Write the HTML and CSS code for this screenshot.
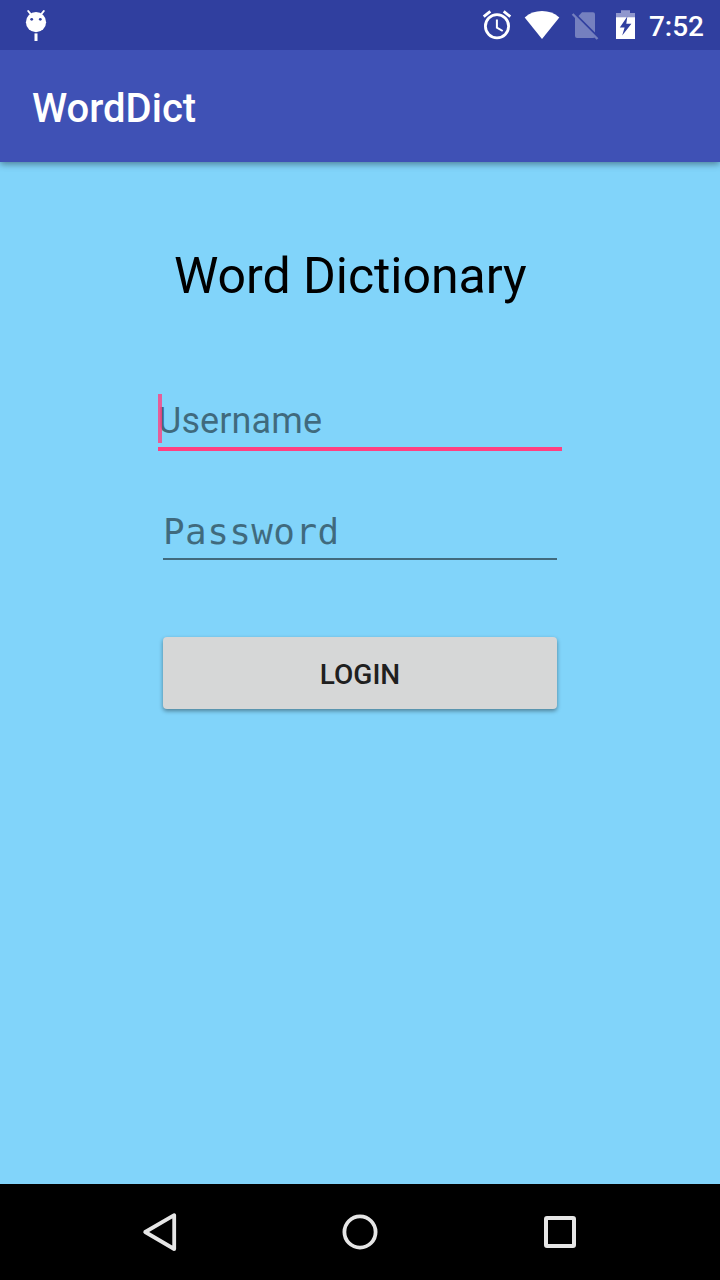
FILE: index.html
```html
<!DOCTYPE html>
<html lang="en">
<head>
<meta charset="utf-8">
<title>WordDict</title>
<link rel="stylesheet" href="styles.css">
</head>
<body>
<div class="screen">
  <header class="status-bar">
    <svg class="debug-icon" width="24" height="34" viewBox="0 0 24 34">
      <circle cx="12" cy="14.2" r="10.1" fill="#fff"/>
      <path d="M4.2 3 L7 6.5 M19.8 3 L17 6.5" stroke="#fff" stroke-width="2" stroke-linecap="round"/>
      <circle cx="7.7" cy="11.3" r="1.4" fill="#303f9f"/>
      <circle cx="16.3" cy="11.3" r="1.4" fill="#303f9f"/>
      <rect x="10.5" y="25.4" width="3" height="7.6" fill="#fff"/>
    </svg>
    <div class="status-icons">
      <svg width="30" height="32" viewBox="482 9 30 32" fill="none" stroke="#fff">
        <circle cx="497" cy="26.2" r="11.6" stroke-width="2.8"/>
        <path d="M496.9 19.5 V27.6 L502.7 31" stroke-width="2"/>
        <path d="M483.7 16.7 L490.3 11.4 M510.3 16.7 L503.7 11.4" stroke-width="2.8"/>
      </svg>
      <svg class="wifi" width="36" height="30" viewBox="524 10 36 30">
        <path d="M542 39 L524.7 17.4 Q532 11 542 11 Q552 11 559.3 17.4 Z" fill="#fff"/>
      </svg>
      <svg class="no-sim" width="28" height="30" viewBox="571 11 28 30" fill="#7580bf">
        <path d="M582 12.3 H593 Q595 12.3 595 14.3 V32.6 L578.5 16 Z"/>
        <path d="M575 16.5 L595 36.4 Q594.5 38 593 38 H577 Q575 38 575 36 Z"/>
        <path d="M572.6 14 L597.5 39" stroke="#7580bf" stroke-width="2.4"/>
      </svg>
      <svg class="battery" width="20" height="30" viewBox="616 10 20 30">
        <path d="M616 17.5 V13 H621 V10.3 H630 V13 H635 V17.5 Z" fill="#8f97cd"/>
        <path d="M616 17.2 H635 V39 H616 Z" fill="#fff"/>
        <path d="M627.3 16.5 L619.8 27.6 H624.6 L622.2 35.6 L631.4 23.8 H626.3 Z" fill="#303f9f"/>
      </svg>
      <span class="clock">7:52</span>
    </div>
  </header>
  <div class="app-bar"><h1 class="app-title">WordDict</h1></div>
  <main class="content">
    <h2 class="heading">Word Dictionary</h2>
    <form class="login-form">
      <div class="field field-active"><span class="cursor"></span><span class="hint">Username</span></div>
      <div class="field field-password"><span class="hint">Password</span></div>
      <button class="login-button" type="button">LOGIN</button>
    </form>
  </main>
  <nav class="nav-bar">
    <svg width="40" height="44" viewBox="140 1210 40 44" fill="none" stroke="#e6e6e6" stroke-width="3.8" stroke-linejoin="round"><path d="M174.2 1215.2 V1249 L145.2 1232 Z"/></svg>
    <svg width="40" height="44" viewBox="340 1210 40 44" fill="none" stroke="#e6e6e6" stroke-width="3.8"><circle cx="360" cy="1232" r="15.6"/></svg>
    <svg width="40" height="44" viewBox="540 1210 40 44" fill="none" stroke="#e6e6e6" stroke-width="4"><rect x="546" y="1218" width="28" height="28" rx="1"/></svg>
  </nav>
</div>
</body>
</html>
```
FILE: styles.css
```css
* { box-sizing: border-box; }
body { margin: 0; font-family: Roboto, sans-serif; }
svg { display: block; flex: none; }
.screen {
  width: 720px;
  height: 1280px;
  display: flex;
  flex-direction: column;
  background: #81d4fa;
  overflow: hidden;
}
.status-bar {
  height: 50px;
  flex: none;
  z-index: 1;
  display: flex;
  justify-content: space-between;
  align-items: flex-start;
  padding: 8px 16px 0 24px;
  background: #303f9f;
}
.status-icons { display: flex; align-items: flex-start; padding-top: 1px; }
.wifi { margin: 1px 0 0 12px; }
.no-sim { margin: 2px 0 0 11px; }
.battery { margin: 1px 0 0 17px; }
.clock {
  margin: 1px 0 0 13px;
  font-size: 28px;
  font-weight: 500;
  line-height: 34px;
  color: #fff;
}
.app-bar {
  height: 112px;
  flex: none;
  padding: 35px 32px 0;
  background: #3f51b5;
  box-shadow: 0 2px 7px rgba(0, 0, 0, .42);
}
.app-title {
  margin: 0;
  font-size: 40px;
  font-weight: 500;
  line-height: 48px;
  color: #fff;
}
.content { flex: 1; padding: 84px 158px 0; }
.heading {
  margin: 0 0 88px 16px;
  font-size: 50px;
  font-weight: 400;
  line-height: 60px;
  letter-spacing: -.04px;
  white-space: nowrap;
  color: #000;
}
.login-form { display: flex; flex-direction: column; }
.field { font-size: 36px; color: rgba(0, 0, 0, .5); }
.field-active {
  position: relative;
  height: 57px;
  line-height: 54px;
  letter-spacing: .1px;
  border-bottom: 4px solid #ff4081;
}
.cursor {
  position: absolute;
  left: 0;
  top: 0;
  width: 4px;
  height: 49px;
  background: rgba(255, 64, 129, .8);
}
.field-password {
  margin: 54px 5px 0;
  height: 55px;
  line-height: 54px;
  border-bottom: 2px solid #416a7d;
  font-family: "DejaVu Sans Mono", monospace;
  letter-spacing: .4px;
}
.login-button {
  margin: 77px 5px 0;
  height: 72px;
  padding: 3px 0 0;
  border: 0;
  border-radius: 4px;
  background: #d6d7d7;
  box-shadow: 0 2px 4px rgba(0, 0, 0, .4);
  font: 500 28px/34px Roboto, sans-serif;
  color: #1f2020;
}
.nav-bar {
  height: 96px;
  flex: none;
  display: flex;
  justify-content: space-between;
  align-items: center;
  padding: 0 140px;
  background: #000;
}
```
